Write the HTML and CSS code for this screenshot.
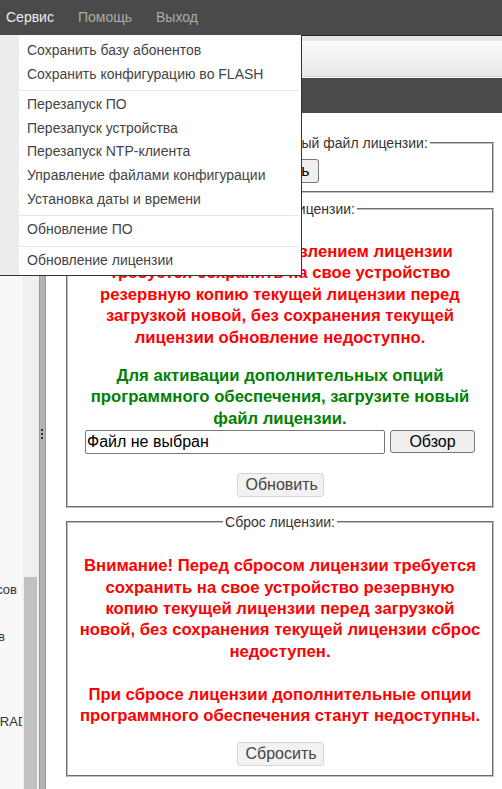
FILE: index.html
```html
<!DOCTYPE html>
<html lang="ru">
<head>
<meta charset="utf-8">
<title>Обновление лицензии</title>
<link rel="stylesheet" href="styles.css">
</head>
<body>
<div class="nav">
  <span class="nav-item active">Сервис</span>
  <span class="nav-item">Помощь</span>
  <span class="nav-item">Выход</span>
</div>
<div class="main">
  <div class="side">
    <div class="tree">
      <div class="tree-item t1"><span>Мониторинг ресурсов</span></div>
      <div class="tree-item t2"><span>Журнал вызовов</span></div>
      <div class="tree-item t3"><span class="over">Сервер RADIUS</span></div>
    </div>
    <div class="track"><div class="thumb"></div></div>
  </div>
  <div class="splitter"><div class="grip"><i></i><i></i><i></i></div></div>
  <div class="content">
    <div class="toolbar"></div>
    <div class="header"></div>
    <div class="panel">
      <fieldset class="fs fs1">
        <legend>Выберите и загрузите новый файл лицензии:</legend>
        <div class="fs1-row"><button class="btn">Применить</button></div>
      </fieldset>
      <fieldset class="fs fs2">
        <legend>Обновление лицензии:</legend>
        <p class="msg red">Внимание! Перед обновлением лицензии требуется сохранить на свое устройство резервную копию текущей лицензии перед загрузкой новой, без сохранения текущей лицензии обновление недоступно.</p>
        <p class="msg green">Для активации дополнительных опций программного обеспечения, загрузите новый файл лицензии.</p>
        <div class="file-row">
          <div class="file-input">Файл не выбран</div>
          <button class="btn browse">Обзор</button>
        </div>
        <div class="action"><button class="btn soft">Обновить</button></div>
      </fieldset>
      <fieldset class="fs fs3">
        <legend>Сброс лицензии:</legend>
        <p class="msg red">Внимание! Перед сбросом лицензии требуется сохранить на свое устройство резервную копию текущей лицензии перед загрузкой новой, без сохранения текущей лицензии сброс недоступен.</p>
        <p class="msg red second">При сбросе лицензии дополнительные опции программного обеспечения станут недоступны.</p>
        <div class="action"><button class="btn soft">Сбросить</button></div>
      </fieldset>
    </div>
  </div>
</div>
<div class="menu">
  <div class="menu-item">Сохранить базу абонентов</div>
  <div class="menu-item">Сохранить конфигурацию во FLASH</div>
  <div class="menu-sep"></div>
  <div class="menu-item">Перезапуск ПО</div>
  <div class="menu-item">Перезапуск устройства</div>
  <div class="menu-item">Перезапуск NTP-клиента</div>
  <div class="menu-item">Управление файлами конфигурации</div>
  <div class="menu-item">Установка даты и времени</div>
  <div class="menu-sep"></div>
  <div class="menu-item">Обновление ПО</div>
  <div class="menu-sep"></div>
  <div class="menu-item">Обновление лицензии</div>
</div>
</body>
</html>
```
FILE: styles.css
```css
html, body {
  margin: 0;
  height: 100%;
}
body {
  font-family: "Liberation Sans", Arial, sans-serif;
  background: #fff;
  overflow: hidden;
  display: flex;
  flex-direction: column;
  position: relative;
}
.nav {
  flex-shrink: 0;
  height: 35px;
  line-height: 34px;
  background: #4a4a4a;
  border-bottom: 1px solid #222;
  font-size: 14px;
  padding-left: 6px;
  display: flex;
  gap: 24px;
}
.nav-item { color: #aaa; }
.nav-item.active { color: #eee; }

.main {
  flex: 1;
  display: flex;
  min-height: 0;
}
.side {
  width: 39px;
  flex-shrink: 0;
  display: flex;
  background: #f8f8f8;
}
.tree {
  width: 22px;
  overflow: hidden;
  font-size: 13px;
  line-height: 16px;
  color: #333;
}
.tree-item {
  display: flex;
  justify-content: flex-end;
  white-space: nowrap;
}
.t1 { margin-top: 546px; padding-right: 5px; }
.t2 { margin-top: 31px; padding-right: 17px; }
.t3 { margin-top: 69px; }
.t3 .over { margin-right: -27px; }
.track {
  width: 17px;
  background: #f0f0f0;
}
.thumb {
  margin: 541px 2px 0 2px;
  height: 300px;
  background: #c1c1c1;
}
.splitter {
  width: 5px;
  flex-shrink: 0;
  background: #b3b3b3;
  border-left: 1px solid #999;
  border-right: 1px solid #999;
  padding-top: 393px;
}
.grip {
  margin-left: 1px;
  display: flex;
  flex-direction: column;
  gap: 2px;
}
.grip i {
  display: block;
  width: 2px;
  height: 2px;
  background: #333;
}

.content {
  flex: 1;
  min-width: 0;
}
.toolbar {
  border-top: 5px solid #e6e6e6;
  height: 35px;
  background: linear-gradient(#fafafa, #e8e8e8);
  border-bottom: 1px solid #d0d0d0;
  margin-bottom: 1px;
}
.header {
  height: 35px;
  background: #4a4a4a;
}
.panel {
  padding: 22px 8px 0 20px;
}
.fs {
  margin: 0;
  padding: 0 10px;
  border: 2px groove #c0c0c0;
  text-align: center;
}
.fs legend {
  margin: 0 auto;
  padding: 0 2px;
  font-size: 14px;
  line-height: 16px;
  color: #333;
}
.fs1 { margin-bottom: 8px; padding-bottom: 8px; }
.fs1-row {
  text-align: left;
  padding-left: 140px;
  margin-top: 8px;
}
.fs2 { padding-bottom: 9px; }
.fs3 { margin-top: 6px; padding-bottom: 9px; }

.msg {
  margin: 0;
  font-size: 16.7px;
  line-height: 21.4px;
  font-weight: bold;
}
.red { color: #f00; }
.green { color: #008000; margin-top: 17px; }
.fs2 .red { margin-top: 24px; }
.fs3 .red { margin-top: 25px; }
.fs3 .red.second { margin-top: 21.4px; }

.file-row {
  display: flex;
  justify-content: center;
  gap: 5px;
  margin-top: 1px;
}
.file-input {
  width: 297px;
  height: 22px;
  line-height: 22px;
  border: 1px solid #767676;
  border-radius: 2px;
  font-size: 16px;
  color: #000;
  text-align: left;
  padding-left: 1px;
}
.btn {
  font-family: "Liberation Sans", Arial, sans-serif;
  font-size: 16px;
  height: 24px;
  padding: 0 8px;
  background: #efefef;
  border: 1px solid #767676;
  border-radius: 3px;
  color: #000;
}
.browse { width: 85px; height: 23px; }
.action { margin-top: 19px; }
.fs3 .action { margin-top: 16px; }
.soft {
  background: #f2f2f2;
  border: 1px solid #d6d6d6;
  color: #444;
  width: 87px;
}

.menu {
  position: absolute;
  top: 35px;
  left: 0;
  width: 301px;
  padding: 4px 0 2.6px;
  background: linear-gradient(to right, #ededed 19px, #fff 19px);
  border-right: 1px solid #333;
  border-bottom: 1px solid #333;
  font-size: 14px;
  color: #444;
}
.menu-item {
  line-height: 23.6px;
  padding-left: 27px;
  white-space: nowrap;
}
.menu-sep {
  height: 1px;
  background: #e6e6e6;
  margin: 4px 2px 2px 19px;
}
```
